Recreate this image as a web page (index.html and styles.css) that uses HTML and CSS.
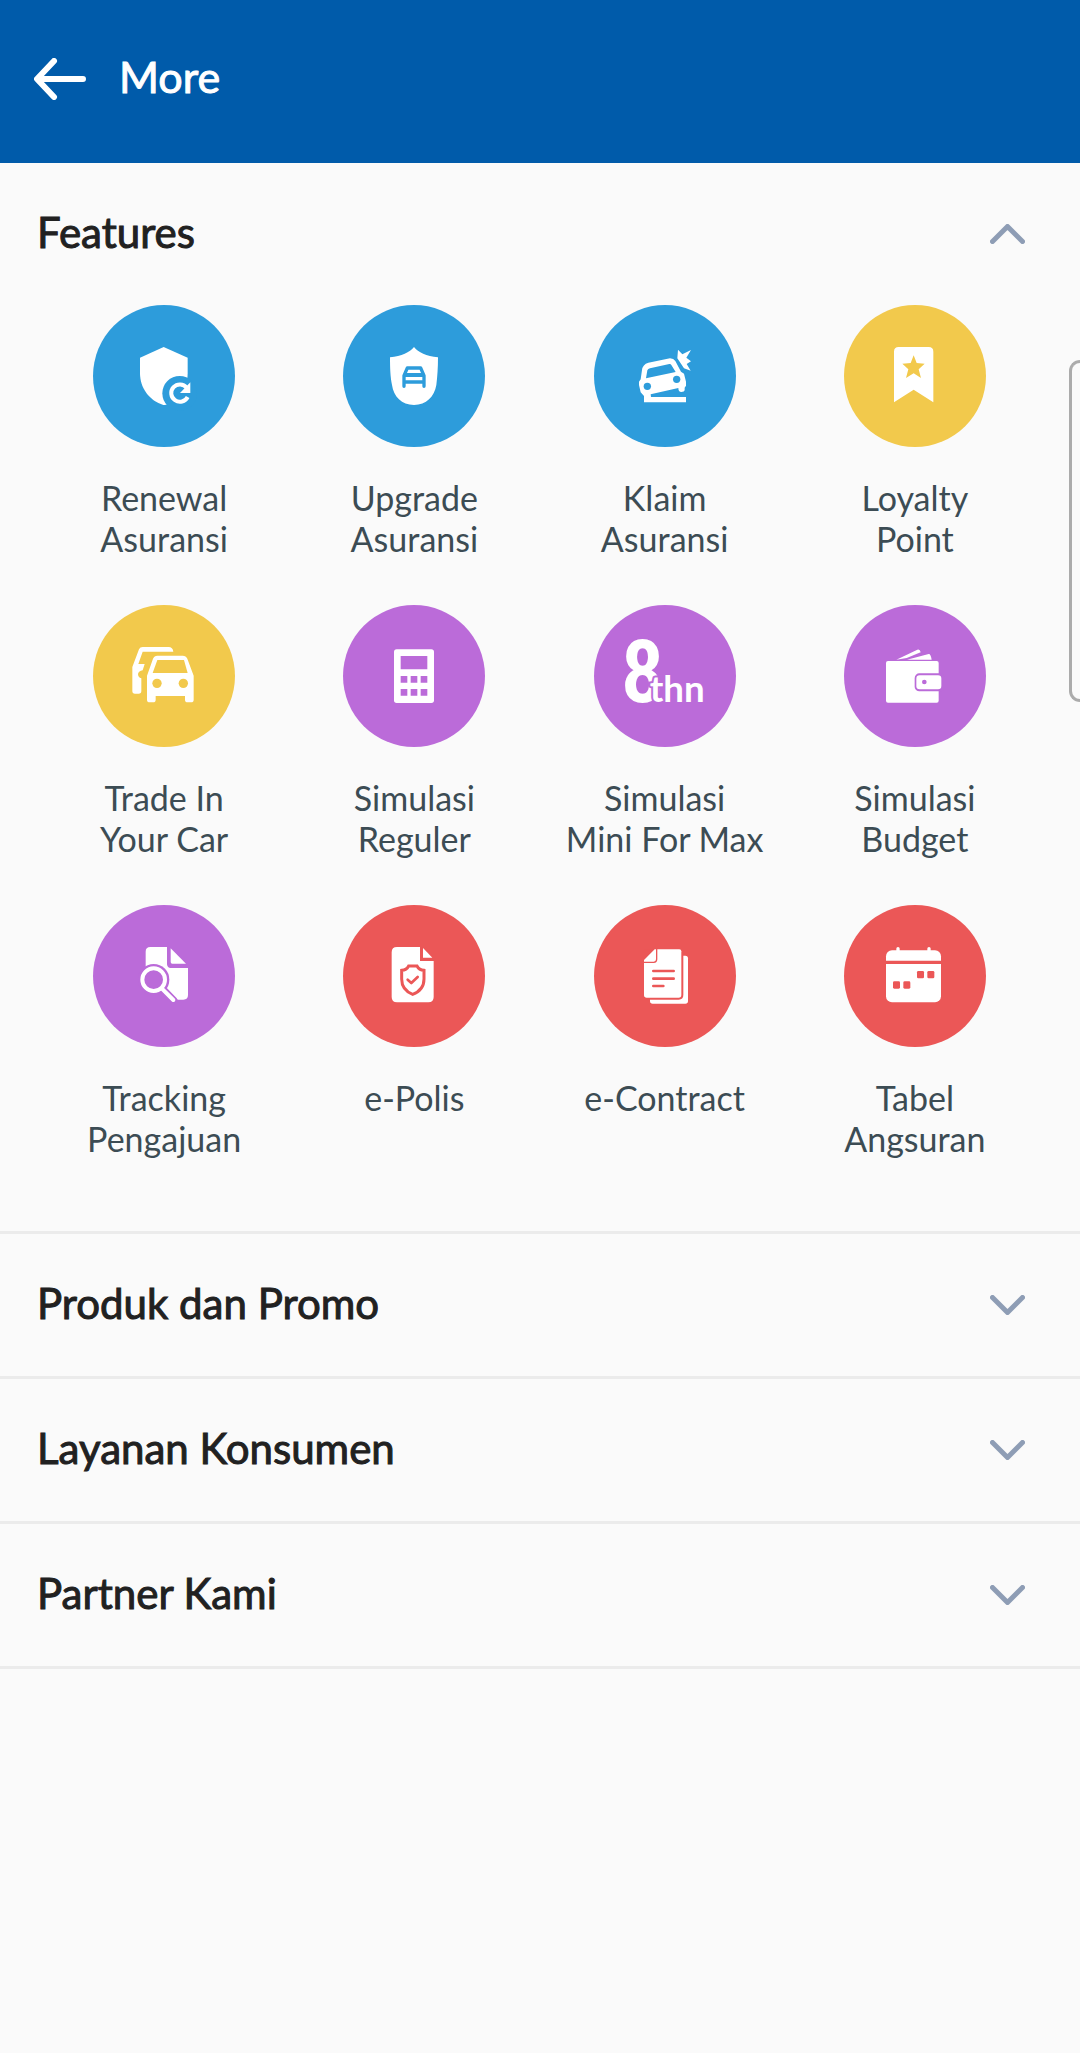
FILE: index.html
```html
<!DOCTYPE html>
<html lang="id">
<head>
<meta charset="utf-8">
<meta name="viewport" content="width=device-width, initial-scale=1">
<title>More</title>
<link rel="stylesheet" href="styles.css">
</head>
<body>
<header class="app-bar">
  <button class="back" type="button" aria-label="Back">
    <svg width="52" height="42" viewBox="0 0 52 42"><path d="M20 3 3 21 20 39M4 21H49"/></svg>
  </button>
  <h1 class="app-title">More</h1>
</header>
<main>
  <section class="group">
    <h2 class="group-head">
      <button class="toggle" type="button" aria-expanded="true">
        <span class="toggle-text">Features</span>
        <svg class="chevron" width="35" height="20" viewBox="0 0 35 20"><path d="M2.500 17.500 17.500 2.500 32.500 17.500"/></svg>
      </button>
    </h2>
    <nav class="features">
      <a class="feature" href="#renewal">
        <svg class="icon blue" viewBox="0 0 426 426">
          <path d="M212 126 284 158V205C284 250 255 290 216 300H211C170 288 141 250 141 205V158Z"/>
          <circle class="cut" cx="260" cy="265" r="52"/>
          <path class="line" stroke-width="12" d="M284 276A26 26 0 1 1 281 248"/>
          <path d="M292 232V264H261Z"/>
        </svg>
        <span class="label">Renewal<br>Asuransi</span>
      </a>
      <a class="feature" href="#upgrade">
        <svg class="icon blue" viewBox="0 0 426 426">
          <path d="M213 126C226 142 250 154 285 157C285 190 283 215 280 240C274 275 250 300 213 300C176 300 152 275 147 240C142 215 141 190 141 157C176 154 200 142 213 126Z"/>
          <path class="cut-line" stroke-width="10" stroke-linejoin="round" stroke-linecap="round" d="M183 244V212L193 189H233L243 212V244M183 231H243"/>
          <path class="cut-line" stroke-width="12" d="M183 210H243"/>
        </svg>
        <span class="label">Upgrade<br>Asuransi</span>
      </a>
      <a class="feature" href="#klaim">
        <svg class="icon blue" viewBox="0 0 426 426">
          <path d="M144 195Q146 178 163 173L228 160Q239 160 244 168L261 200L270 206L276 230V242L272 248V256Q271 261 262 261Q253 261 253 249L170 268L171 276H276V292H150V273L140 262L135 240V230L140 223Z"/>
          <path class="cut" d="M156 220 160 196Q162 191 168 190L226 177Q230 176 232 180L245 201Z"/>
          <circle class="cut" cx="160" cy="244" r="11"/>
          <circle class="cut" cx="248" cy="223" r="11"/>
          <path d="M252 134 265 148 291 135 277 158 291 169 278 177 290 197 270 190 250 160Z"/>
        </svg>
        <span class="label">Klaim<br>Asuransi</span>
      </a>
      <a class="feature" href="#loyalty">
        <svg class="icon yellow" viewBox="0 0 426 426">
          <path d="M164 126H254Q268 126 268 140V292L209 254 150 292V140Q150 126 164 126Z"/>
          <path class="cut" d="M209 151 218 174 242 176 224 193 231 219 209 205 186 219 193 193 175 176 200 174Z"/>
        </svg>
        <span class="label">Loyalty<br>Point</span>
      </a>
      <a class="feature" href="#trade-in">
        <svg class="icon yellow" viewBox="0 0 426 426">
          <path d="M193 152H269Q279 152 283 161L302 212V284Q302 292 294 292H284Q276 292 276 284V273H188V284Q188 292 180 292H170Q162 292 162 284V212L180 161Q184 152 193 152Z"/>
          <path class="cut" d="M193 165H273L284 204H179Z"/>
          <circle class="cut" cx="192" cy="235" r="14"/>
          <circle class="cut" cx="271" cy="235" r="14"/>
          <path d="M241 140Q239 126 227 126H149Q141 126 138 133L118 186V258Q118 266 126 266H137Q145 266 145 258V220Q135 217 135 207Q137 198 149 196L155 177H136L149 140Z"/>
        </svg>
        <span class="label">Trade In<br>Your Car</span>
      </a>
      <a class="feature" href="#simulasi-reguler">
        <svg class="icon purple" viewBox="0 0 426 426">
          <rect x="153" y="133" width="120" height="161" rx="8"/>
          <path class="cut" d="M173 153h80v40h-80zM173 213h20v20h-20zM203 213h20v20h-20zM233 213h20v20h-20zM173 252h20v20h-20zM203 252h20v20h-20zM233 252h20v20h-20z"/>
        </svg>
        <span class="label">Simulasi<br>Reguler</span>
      </a>
      <a class="feature" href="#simulasi-mini">
        <svg class="icon purple" viewBox="0 0 426 426">
          <text class="eight" x="146" y="290">8</text>
          <text class="thn" x="167" y="292">thn</text>
        </svg>
        <span class="label">Simulasi<br>Mini For Max</span>
      </a>
      <a class="feature" href="#simulasi-budget">
        <svg class="icon purple" viewBox="0 0 426 426">
          <path d="M157 164 220 134Q228 131 230 142L188 159Z"/>
          <path d="M189 164 254 147Q260 146 263 164Z"/>
          <rect x="126" y="168" width="158" height="125" rx="6"/>
          <rect class="cut" x="212" y="205" width="90" height="54" rx="14"/>
          <rect x="217" y="211" width="75" height="42" rx="10"/>
          <circle class="cut" cx="241" cy="231" r="7"/>
        </svg>
        <span class="label">Simulasi<br>Budget</span>
      </a>
      <a class="feature" href="#tracking">
        <svg class="icon purple" viewBox="0 0 426 426">
          <path d="M172 126H222V178Q223 189 233 189H285V270Q285 284 271 284H253L210 240L158 186V140Q158 126 172 126Z"/>
          <path d="M233 130 279 176H238Q233 176 233 171Z"/>
          <circle class="cut" cx="182" cy="224" r="47"/>
          <path class="cut-line" stroke-width="24" stroke-linecap="round" d="M207 251 242 287"/>
          <circle class="line" cx="182" cy="224" r="34" stroke-width="12"/>
          <path class="line" stroke-width="12" stroke-linecap="round" d="M206 250 241 285"/>
        </svg>
        <span class="label">Tracking<br>Pengajuan</span>
      </a>
      <a class="feature" href="#e-polis">
        <svg class="icon red" viewBox="0 0 426 426">
          <path d="M162 126H231V168H272V276Q272 292 256 292H162Q146 292 146 276V142Q146 126 162 126Z"/>
          <path d="M240 129 268 158H240Z"/>
          <path class="cut-line" stroke-width="9" d="M197 183H222Q228 195 243 196V222Q243 255 209 268Q176 255 176 222V196Q191 195 197 183Z"/>
          <path class="cut-line" stroke-width="8" stroke-linecap="round" stroke-linejoin="round" d="M194 224 205 234 224 216"/>
        </svg>
        <span class="label">e-Polis</span>
      </a>
      <a class="feature" href="#e-contract">
        <svg class="icon red" viewBox="0 0 426 426">
          <rect x="168" y="152" width="114" height="144" rx="8"/>
          <path class="cut" d="M150 133H262Q268 133 268 139V270Q268 284 254 284H150Z"/>
          <path d="M182 133H256Q262 133 262 139V270Q262 278 254 278H158Q150 278 150 270V165Z"/>
          <path class="cut-line" stroke-width="4" d="M188 131V163Q188 172 179 172H148"/>
          <path class="cut-line" stroke-width="8" stroke-linecap="round" d="M178 198H239M178 221H239M178 243H208"/>
        </svg>
        <span class="label">e-Contract</span>
      </a>
      <a class="feature" href="#tabel-angsuran">
        <svg class="icon red" viewBox="0 0 426 426">
          <rect x="126" y="136" width="165" height="156" rx="18"/>
          <rect x="157" y="126" width="10" height="20" rx="5"/>
          <rect x="250" y="126" width="10" height="20" rx="5"/>
          <path class="cut" d="M120 167H296V177H120Z"/>
          <rect class="cut" x="219" y="198" width="21" height="22" rx="4"/>
          <rect class="cut" x="250" y="198" width="21" height="22" rx="4"/>
          <rect class="cut" x="147" y="229" width="21" height="22" rx="4"/>
          <rect class="cut" x="178" y="229" width="21" height="22" rx="4"/>
        </svg>
        <span class="label">Tabel<br>Angsuran</span>
      </a>
    </nav>
  </section>
  <section class="group">
    <h2 class="group-head">
      <button class="toggle" type="button" aria-expanded="false">
        <span class="toggle-text">Produk dan Promo</span>
        <svg class="chevron" width="35" height="20" viewBox="0 0 35 20"><path d="M2.500 2.500 17.500 17.500 32.500 2.500"/></svg>
      </button>
    </h2>
  </section>
  <section class="group">
    <h2 class="group-head">
      <button class="toggle" type="button" aria-expanded="false">
        <span class="toggle-text">Layanan Konsumen</span>
        <svg class="chevron" width="35" height="20" viewBox="0 0 35 20"><path d="M2.500 2.500 17.500 17.500 32.500 2.500"/></svg>
      </button>
    </h2>
  </section>
  <section class="group">
    <h2 class="group-head">
      <button class="toggle" type="button" aria-expanded="false">
        <span class="toggle-text">Partner Kami</span>
        <svg class="chevron" width="35" height="20" viewBox="0 0 35 20"><path d="M2.500 2.500 17.500 17.500 32.500 2.500"/></svg>
      </button>
    </h2>
  </section>
</main>
<div class="edge-handle"></div>
</body>
</html>
```
FILE: styles.css
```css
* {
  box-sizing: border-box;
}

body {
  position: relative;
  margin: 0;
  min-height: 100vh;
  overflow-x: hidden;
  background: #fafafa;
  color: #212121;
  font-family: Lato, "Open Sans", sans-serif;
}

button {
  border: 0;
  background: none;
  color: inherit;
  font: inherit;
  cursor: pointer;
}

.app-bar {
  display: flex;
  align-items: center;
  gap: 33px;
  padding: 52px 34px 58px;
  background: #005baa;
  color: #fff;
}

.back {
  display: flex;
  padding: 0;
}

.back path {
  fill: none;
  stroke: currentColor;
  stroke-width: 6;
  stroke-linecap: round;
  stroke-linejoin: round;
}

.app-title,
.toggle-text {
  margin: 0;
  padding-bottom: 4px;
  font-size: 42px;
  font-weight: 400;
  line-height: 50px;
  -webkit-text-stroke: 1px currentColor;
}

.app-title {
  padding-bottom: 3px;
  font-size: 43px;
}

.group {
  border-bottom: 3px solid #ebebeb;
}

.group-head {
  margin: 0;
  font-size: 42px;
  font-weight: 400;
}

.toggle {
  display: flex;
  align-items: center;
  justify-content: space-between;
  width: 100%;
  height: 142px;
  padding: 0 55px 0 37px;
  text-align: left;
}

.chevron path {
  fill: none;
  stroke: #8e9db5;
  stroke-width: 5;
  stroke-linecap: round;
  stroke-linejoin: round;
}

.features {
  display: grid;
  grid-template-columns: repeat(4, 1fr);
  row-gap: 46px;
  padding: 0 40px 72px 39px;
}

.feature {
  display: flex;
  flex-direction: column;
  align-items: center;
  gap: 30px;
  color: #3c4c54;
  text-decoration: none;
}

.label {
  font-size: 34px;
  line-height: 41px;
  text-align: center;
  white-space: nowrap;
}

.icon {
  width: 142px;
  height: 142px;
  border-radius: 50%;
  background: var(--tone);
  fill: #fff;
}

.blue {
  --tone: #2d9cdb;
}

.yellow {
  --tone: #f2c94c;
}

.purple {
  --tone: #bb6bd9;
}

.red {
  --tone: #eb5757;
}

.cut {
  fill: var(--tone);
}

.cut-line {
  fill: none;
  stroke: var(--tone);
}

.line {
  fill: none;
  stroke: #fff;
}

.eight {
  font: 600 260px "Roboto Condensed", "Noto Sans ExtraCondensed", "Noto Sans Condensed", "Open Sans Condensed", "Liberation Sans Narrow", Lato, sans-serif;
  text-anchor: middle;
}

.thn {
  font: 700 110px Lato, sans-serif;
  stroke: var(--tone);
  stroke-width: 12px;
  paint-order: stroke;
}

.edge-handle {
  position: absolute;
  top: 360px;
  right: 0;
  width: 11px;
  height: 342px;
  border: 3px solid #ababab;
  border-right: 0;
  border-radius: 11px 0 0 11px;
}
```
